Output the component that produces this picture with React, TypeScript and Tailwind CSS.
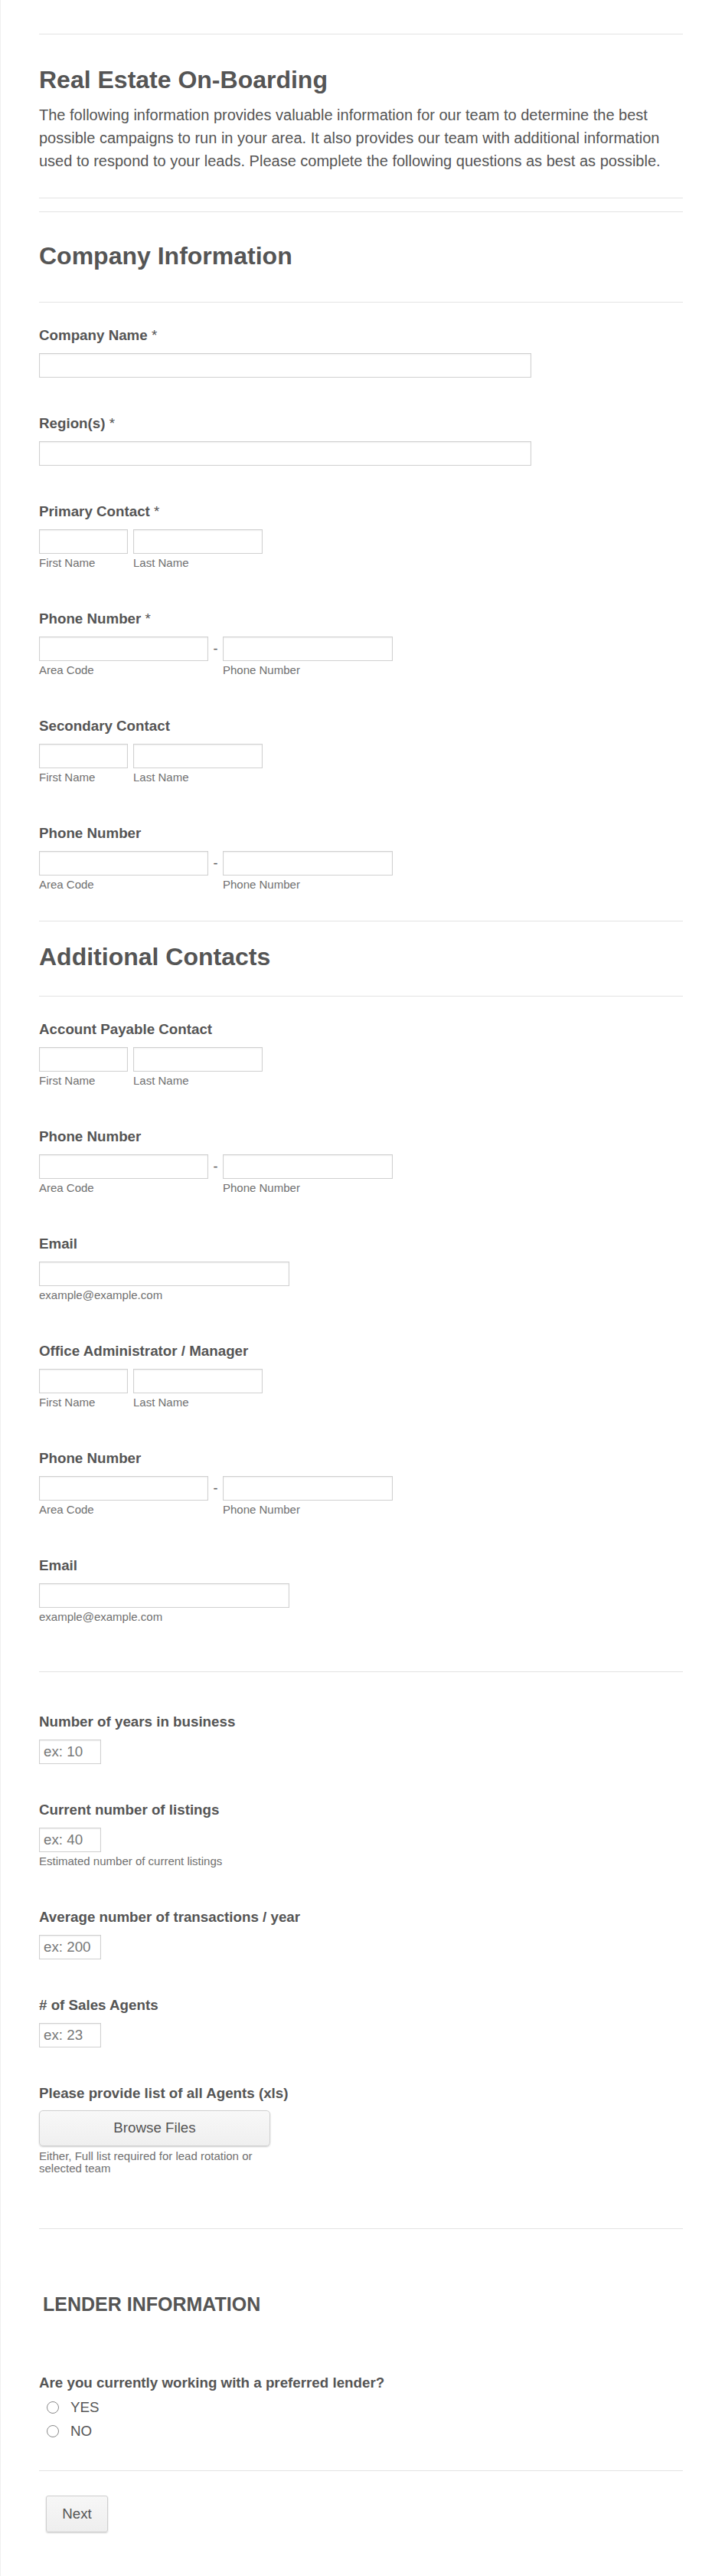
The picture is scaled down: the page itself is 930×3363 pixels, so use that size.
const font = "font-['Liberation_Sans',Arial,sans-serif]";

const Divider = ({ className = "" }: { className?: string }) => (
    <div className={`h-px w-full bg-[#e3e3e3] ${className}`}></div>
);

const Label = ({ text, required }: { text: string; required?: boolean }) => (
    <div className="text-[18.75px] leading-[24px] font-bold text-[#555]">
        {text}
        {required && <span className="font-normal"> *</span>}
    </div>
);

const Sub = ({ text }: { text: string }) => (
    <div className="mt-[4px] h-[19px] text-[15px] leading-[16px] text-[#707070] whitespace-nowrap">{text}</div>
);

const inputCls =
    "block h-[32px] border border-[#d0d0d0] bg-white shadow-[inset_0_1px_2px_rgba(0,0,0,0.07)] px-[5px] text-[18.75px] text-[#555] placeholder:text-[#777] outline-none";

const TextField = ({ label, required, width }: { label: string; required?: boolean; width: string }) => (
    <div>
        <Label text={label} required={required} />
        <input className={`${inputCls} mt-[11px] ${width}`} />
    </div>
);

const NameField = ({ label, required }: { label: string; required?: boolean }) => (
    <div>
        <Label text={label} required={required} />
        <div className="mt-[11px] flex gap-[7px]">
            <div>
                <input className={`${inputCls} w-[116px]`} />
                <Sub text="First Name" />
            </div>
            <div>
                <input className={`${inputCls} w-[169px]`} />
                <Sub text="Last Name" />
            </div>
        </div>
    </div>
);

const PhoneField = ({ label, required }: { label: string; required?: boolean }) => (
    <div>
        <Label text={label} required={required} />
        <div className="mt-[11px] flex">
            <div>
                <input className={`${inputCls} w-[221px]`} />
                <Sub text="Area Code" />
            </div>
            <div className="w-[19px] h-[32px] flex items-center justify-center text-[18px] text-[#555]">-</div>
            <div>
                <input className={`${inputCls} w-[222px]`} />
                <Sub text="Phone Number" />
            </div>
        </div>
    </div>
);

const EmailField = () => (
    <div>
        <Label text="Email" />
        <input className={`${inputCls} mt-[11px] w-[327px]`} />
        <Sub text="example@example.com" />
    </div>
);

const NumberField = ({ label, placeholder, sub }: { label: string; placeholder: string; sub?: string }) => (
    <div>
        <Label text={label} />
        <input placeholder={placeholder} className={`${inputCls} mt-[11px] w-[81px] px-[4px]`} />
        {sub && <Sub text={sub} />}
    </div>
);

const Radio = ({ text }: { text: string }) => (
    <div className="flex h-[28px] items-center">
        <span className="ml-[10px] h-[16px] w-[16px] rounded-full border border-[#8a8a8a] bg-white"></span>
        <span className="ml-[15px] text-[18.75px] leading-[28px] text-[#555]">{text}</span>
    </div>
);

export default function App() {
    return (
        <div className={`${font} min-h-[3363px] bg-white border-l border-[#f0f0f0]`}>
            <div className="ml-[50px] w-[841px] pt-[44px] pb-[56px]">
                <Divider />
                <h1 className="mt-[39px] text-[32px] leading-[40px] font-bold text-[#555]">Real Estate On-Boarding</h1>
                <p className="mt-[11px] text-[20px] leading-[30px] text-[#555]">
                    The following information provides valuable information for our team to determine the best possible campaigns to run in your area. It also provides our team with additional information used to respond to your leads. Please complete the following questions as best as possible.
                </p>
                <Divider className="mt-[33px]" />
                <Divider className="mt-[17px]" />
                <h2 className="mt-[37px] text-[32px] leading-[40px] font-bold text-[#555]">Company Information</h2>
                <Divider className="mt-[40px]" />

                <div className="mt-[31px]">
                    <TextField label="Company Name" required width="w-[643px]" />
                </div>
                <div className="mt-[48px]">
                    <TextField label="Region(s)" required width="w-[643px]" />
                </div>
                <div className="mt-[48px] flex flex-col gap-[50px]">
                    <NameField label="Primary Contact" required />
                    <PhoneField label="Phone Number" required />
                    <NameField label="Secondary Contact" />
                    <PhoneField label="Phone Number" />
                </div>

                <Divider className="mt-[36px]" />
                <h2 className="mt-[26px] text-[32px] leading-[40px] font-bold text-[#555]">Additional Contacts</h2>
                <Divider className="mt-[31px]" />

                <div className="mt-[31px] flex flex-col gap-[50px]">
                    <NameField label="Account Payable Contact" />
                    <PhoneField label="Phone Number" />
                    <EmailField />
                    <NameField label="Office Administrator / Manager" />
                    <PhoneField label="Phone Number" />
                    <EmailField />
                </div>

                <Divider className="mt-[60px]" />

                <div className="mt-[53px]">
                    <NumberField label="Number of years in business" placeholder="ex: 10" />
                </div>
                <div className="mt-[48px]">
                    <NumberField label="Current number of listings" placeholder="ex: 40" sub="Estimated number of current listings" />
                </div>
                <div className="mt-[50px]">
                    <NumberField label="Average number of transactions / year" placeholder="ex: 200" />
                </div>
                <div className="mt-[48px]">
                    <NumberField label="# of Sales Agents" placeholder="ex: 23" />
                </div>
                <div className="mt-[48px]">
                    <Label text="Please provide list of all Agents (xls)" />
                    <button className="mt-[10px] block h-[47px] w-[302px] rounded-[5px] border border-[#cfcfcf] bg-gradient-to-b from-[#f8f8f8] to-[#efefef] shadow-[0_1px_2px_rgba(0,0,0,0.18)] text-[18.75px] text-[#555]">
                        Browse Files
                    </button>
                    <div className="mt-[5px] w-[302px] text-[15px] leading-[16px] text-[#707070]">
                        Either, Full list required for lead rotation or selected team
                    </div>
                </div>

                <Divider className="mt-[70px]" />

                <h3 className="mt-[82px] ml-[5px] text-[25px] leading-[32px] font-bold text-[#555]">LENDER INFORMATION</h3>

                <div className="mt-[75px]">
                    <Label text="Are you currently working with a preferred lender?" />
                    <div className="mt-[6px] flex flex-col gap-[3px]">
                        <Radio text="YES" />
                        <Radio text="NO" />
                    </div>
                </div>

                <Divider className="mt-[37px]" />

                <button className="mt-[32px] ml-[9px] block h-[48px] w-[81px] rounded-[3px] border border-[#cfcfcf] bg-gradient-to-b from-[#f7f7f7] to-[#eeeeee] shadow-[0_1px_2px_rgba(0,0,0,0.18)] text-[18.75px] text-[#555]">
                    Next
                </button>
            </div>
        </div>
    );
}
